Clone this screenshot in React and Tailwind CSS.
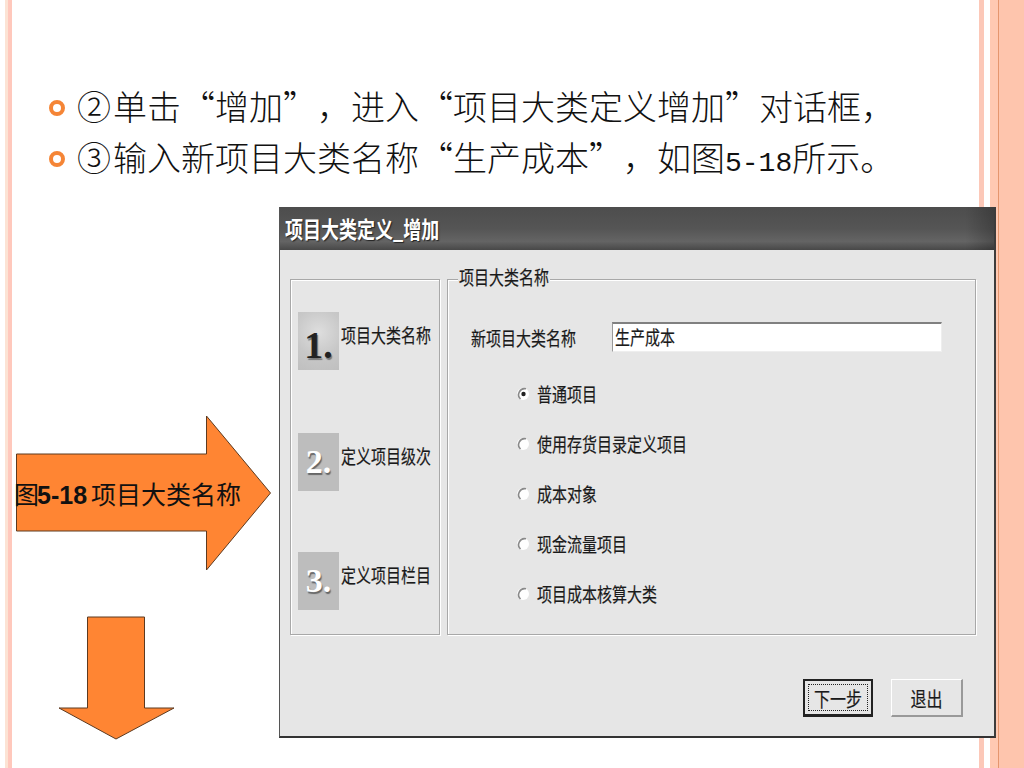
import React from 'react'

const cjk = { fontFamily: '"Noto Sans CJK SC", sans-serif' }

// the dialog text in the picture is stretched upward
function Tall({ children, className = '' }) {
  return <span className={`inline-block scale-y-[1.3] [-webkit-text-stroke:0.15px_#1a1a1a] whitespace-nowrap ${className}`}>{children}</span>
}

function Bullet({ mark, children }) {
  return (
    <div className="flex items-center h-[51px] pl-[37px]">
      <span className="w-[16px] h-[16px] rounded-full border-[4px] border-[#f58536] shrink-0" />
      <span className="ml-[12px] pb-[4px] text-[34px] leading-[51px] text-[#111] font-light whitespace-nowrap">
        <span className="mr-[2px]">{mark}</span>{children}
      </span>
    </div>
  )
}

function Step({ n, label, dark, className = '' }) {
  return (
    <div className={`flex items-center ${className}`}>
      <div className={`w-[41px] h-[58px] flex items-center justify-center shrink-0 ${dark ? 'bg-[radial-gradient(circle_at_50%_35%,#dedede_0%,#c8c8c8_55%,#bfbfbf_100%)] pt-[8px]' : 'bg-[#bdbdbd]'}`}>
        <span
          className={`font-bold leading-none ${dark ? 'text-[38px] text-[#222] [text-shadow:1px_2px_1px_#777]' : 'text-[34px] text-white [text-shadow:1px_2px_1px_#666]'}`}
          style={{ fontFamily: '"Liberation Serif", serif' }}
        >
          {n}.
        </span>
      </div>
      <span className="ml-[2px] pb-[12px] text-[15px] leading-[20px] text-[#1a1a1a]"><Tall>{label}</Tall></span>
    </div>
  )
}

function Radio({ label, checked }) {
  return (
    <div className="flex items-center h-[50px]">
      <svg width="14" height="16" viewBox="0 0 14 16" className="shrink-0">
        <circle cx="7" cy="8" r="6" fill="#fff" />
        <path d="M10 2.8 A6 6 0 0 0 4.5 13" fill="none" stroke="#8a8a8a" strokeWidth="1.6" />
        {checked && <circle cx="7.5" cy="8" r="2.2" fill="#222" />}
      </svg>
      <span className="ml-[7px] text-[15px] leading-[20px] text-[#1a1a1a]"><Tall>{label}</Tall></span>
    </div>
  )
}

export default function App() {
  return (
    <div className="relative w-[1024px] h-[768px] flex bg-white overflow-hidden [text-spacing-trim:space-all]" style={cjk}>
      {/* left stripe */}
      <div className="ml-[5px] w-[3px] h-full bg-[#fce3d4] shrink-0" />
      <div className="w-[4px] h-full bg-[#ffc8bc] shrink-0" />

      <div className="w-[967px] shrink-0 relative z-10">
        <div className="pt-[82px]">
          <Bullet mark="②">单击“增加”，进入“项目大类定义增加”对话框，</Bullet>
          <Bullet mark="③">输入新项目大类名称“生产成本”，如图<span className="text-[28px] leading-none" style={{ fontFamily: '"Liberation Mono", monospace' }}>5-18</span>所示。</Bullet>
        </div>

        <div className="flex items-start mt-[23px]">
          {/* arrows */}
          <div className="w-[267px] shrink-0 pt-[208px]">
            <div className="relative w-[258px] h-[156px] ml-[3px]">
              <svg width="258" height="156" viewBox="0 0 258 156">
                <path d="M1.5 39 H191.5 V1 L255.5 78 L191.5 155 V116 H1.5 Z" fill="#ff8533" stroke="#5c3a20" strokeWidth="1" />
              </svg>
              <div className="absolute left-[-1px] top-[63px] text-[25px] leading-[30px] text-[#111] whitespace-nowrap">
                图<span className="font-bold -ml-[2px]" style={{ fontFamily: '"Liberation Sans", sans-serif' }}>5-18</span><span className="ml-[4px]">项目大类名称</span>
              </div>
            </div>
            <svg width="118" height="124" viewBox="0 0 118 124" className="ml-[46px] mt-[45px]">
              <path d="M29.5 1 H86.5 V92 H116 L58 123 L1 92 H29.5 Z" fill="#ff8533" stroke="#5c3a20" strokeWidth="1" />
            </svg>
          </div>

          {/* dialog */}
          <div className="w-[717px] h-[531px] shrink-0 flex flex-col bg-[#e6e6e6] border-l border-l-[#555] border-r-2 border-r-[#3c3c3c] border-b-2 border-b-[#333]">
            <div className="h-[43px] shrink-0 flex items-center pl-[5px] bg-[linear-gradient(90deg,transparent_96%,rgba(0,0,0,.22)_100%),linear-gradient(180deg,#4d4d4d_0%,#555_50%,#646464_80%,#484848_100%)]">
              <span className="inline-block scale-y-[1.25] text-[18px] font-bold text-white [text-shadow:1px_1px_1px_#222] whitespace-nowrap">项目大类定义_增加</span>
            </div>

            <div className="flex gap-[7px] pl-[10px] pt-[29px]">
              <div className="w-[150px] h-[356px] border border-[#a8a8a8] shadow-[1px_1px_0_#fff,inset_1px_1px_0_#fff] pt-[32px] pl-[7px]">
                <Step n="1" label="项目大类名称" dark />
                <Step n="2" label="定义项目级次" className="mt-[63px]" />
                <Step n="3" label="定义项目栏目" className="mt-[61px]" />
              </div>

              <div className="relative w-[529px] h-[356px] border border-[#a8a8a8] shadow-[1px_1px_0_#fff,inset_1px_1px_0_#fff] pt-[42px] pl-[23px]">
                <span className="absolute left-[10px] top-[-13px] px-[1px] bg-[#e6e6e6] text-[15px] leading-[20px] text-[#1a1a1a]"><Tall>项目大类名称</Tall></span>
                <div className="flex items-center">
                  <span className="w-[141px] text-[15px] leading-[20px] pt-[2px] text-[#1a1a1a]"><Tall>新项目大类名称</Tall></span>
                  <div className="w-[330px] h-[30px] bg-white border-t-2 border-t-[#808080] border-l border-l-[#999] border-r border-r-[#eee] border-b border-b-[#eee] pl-[2px] text-[15px] leading-[26px] text-[#1a1a1a]">
                    <Tall>生产成本</Tall>
                  </div>
                </div>
                <div className="mt-[17px] ml-[45px]">
                  <Radio label="普通项目" checked />
                  <Radio label="使用存货目录定义项目" />
                  <Radio label="成本对象" />
                  <Radio label="现金流量项目" />
                  <Radio label="项目成本核算大类" />
                </div>
              </div>
            </div>

            <div className="flex justify-end gap-[18px] pr-[31px] mt-[44px]">
              <button className="w-[70px] h-[38px] border-2 border-[#222] border-b-[3px] bg-[#e6e6e6] p-[3px]">
                <span className="flex items-center justify-center h-full border border-dotted border-[#222] text-[16px] text-[#1a1a1a]"><Tall>下一步</Tall></span>
              </button>
              <button className="w-[72px] h-[38px] bg-[#e6e6e6] border-t border-l border-t-white border-l-white border-r-2 border-b-2 border-r-[#999] border-b-[#999] text-[16px] text-[#1a1a1a]"><Tall>退出</Tall></button>
            </div>
          </div>
        </div>
      </div>

      {/* right stripes */}
      <div className="w-[5px] h-full bg-[#fcc8b8] shrink-0" />
      <div className="w-[6px] h-full shrink-0" />
      <div className="w-[9px] h-full bg-[#ffc9b2] border-r border-r-[#e5966e] shrink-0" />
      <div className="flex-1 h-full bg-[#fec5ad]" />
    </div>
  )
}
